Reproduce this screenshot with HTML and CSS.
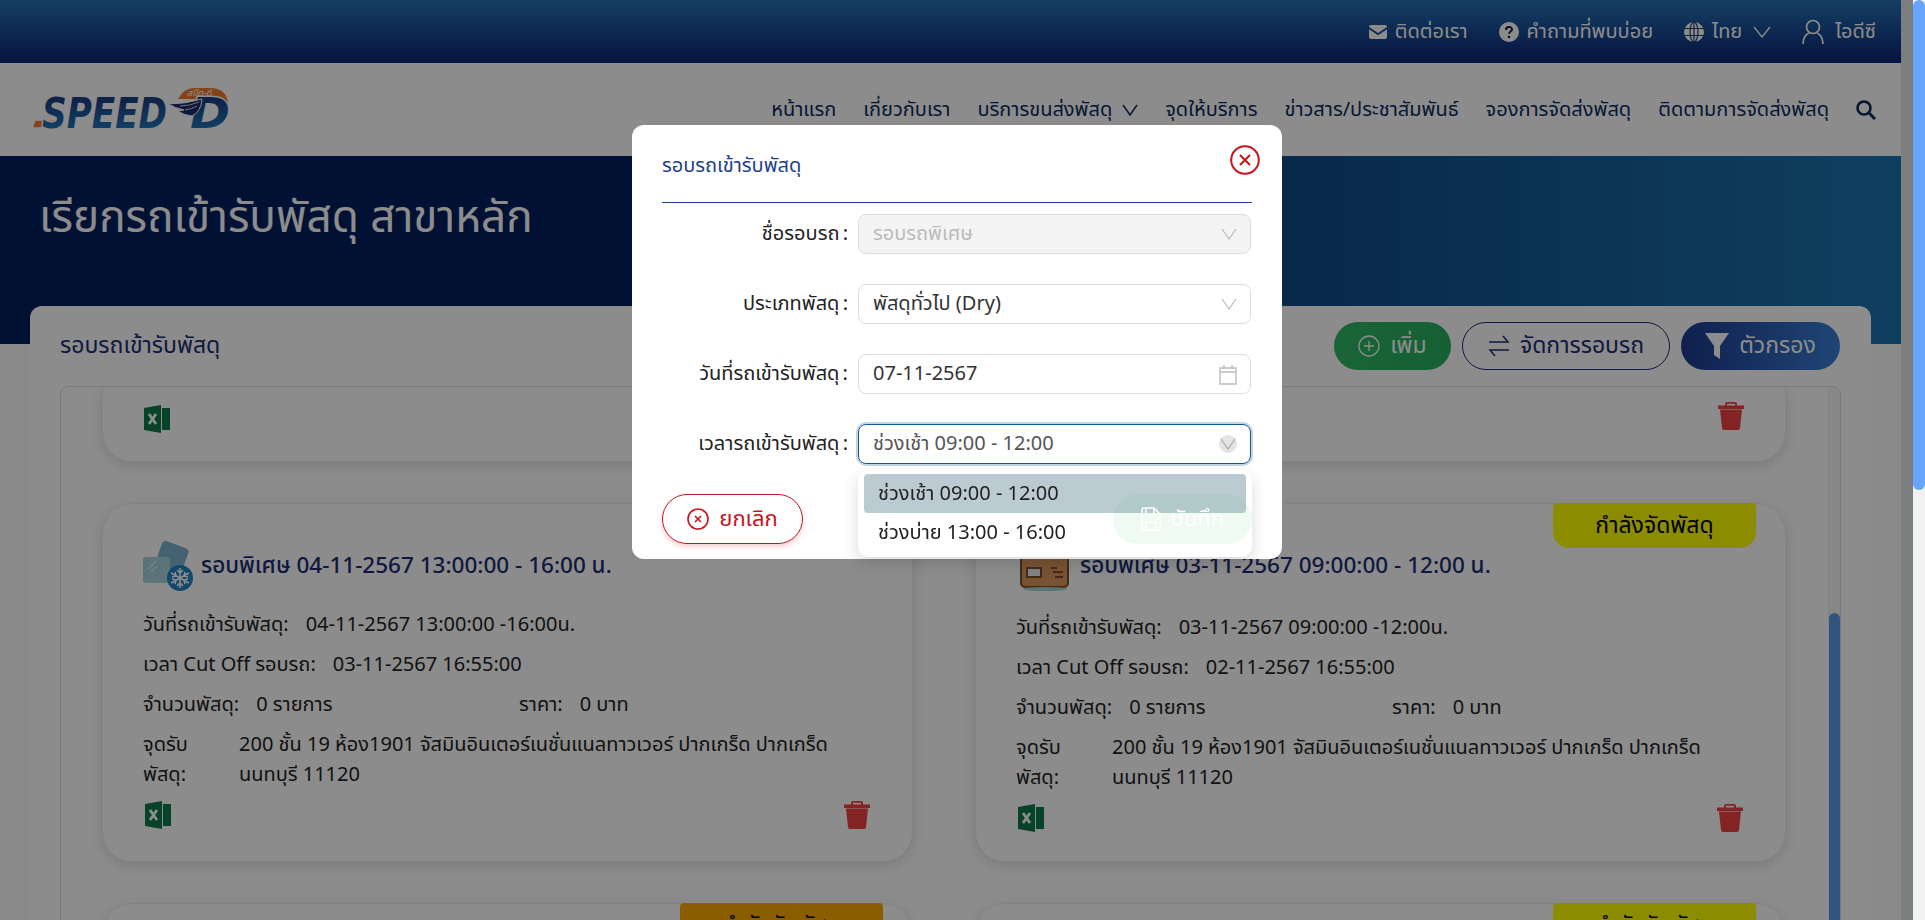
FILE: index.html
```html
<!DOCTYPE html>
<html lang="th">
<head>
  <meta charset="UTF-8">
  <title>Speed-D</title>
  <link rel="stylesheet" href="styles.css">
</head>
<body>

<div class="page">
  <div class="topbar">
    <a class="top-link">
      <svg width="18" height="14" viewBox="0 0 18 14"><path fill="#fff" d="M2 0h14a2 2 0 0 1 2 2L9 8 0 2a2 2 0 0 1 2-2zM0 4.2l9 6 9-6V12a2 2 0 0 1-2 2H2a2 2 0 0 1-2-2z"/></svg>
      ติดต่อเรา
    </a>
    <a class="top-link">
      <svg width="20" height="20" viewBox="0 0 20 20"><circle cx="10" cy="10" r="10" fill="#fff"/><path d="M7 8c0-4 6-4 6-.6 0 2.200-3 2-3 4.300" fill="none" stroke="#123" stroke-width="2"/><circle cx="10" cy="15" r="1.300" fill="#123"/></svg>
      คำถามที่พบบ่อย
    </a>
    <a class="top-link">
      <svg width="20" height="24" viewBox="0 0 20 24"><circle cx="10" cy="12" r="10" fill="#fff"/><g fill="none" stroke="#1b3f6c" stroke-width="1.200"><ellipse cx="10" cy="12" rx="4" ry="10"/><path d="M10 2v20M0 8.500h20M0 15.500h20"/></g></svg>
      ไทย
      <svg class="chev-top" width="18" height="12" viewBox="0 0 18 12"><path d="M1 1l8 10 8-10" fill="none" stroke="#fff" stroke-width="1.300"/></svg>
    </a>
    <a class="top-link top-user">
      <svg width="22" height="26" viewBox="0 0 22 26"><g fill="none" stroke="#fff" stroke-width="1.700"><circle cx="11" cy="8" r="6.500"/><path d="M1 25c0-7 4-10.500 6-11M21 25c0-7-4-10.500-6-11"/></g></svg>
      ไอดีซี
    </a>
  </div>

  <nav class="navbar">
    <svg class="logo" width="204" height="64" viewBox="0 0 204 64">
      <defs>
        <linearGradient id="logoBlue" x1="0" y1="0" x2="0" y2="1">
          <stop offset="0" stop-color="#1c2a6e"/>
          <stop offset="1" stop-color="#1f86c8"/>
        </linearGradient>
      </defs>
      <g transform="translate(0 6)">
        <path d="M5 36h30l-3 8H2z" fill="#f47a2a" stroke="#fff" stroke-width="1.500"/>
        <path d="M148 15q6-11 16-11h18q15 1 16 16l-8 3q-1-7-8-8z" fill="#f47a2a"/>
        <text class="logo-small" x="157" y="12">สปีด-ดี</text>
        <text class="logo-word" x="12" y="44" textLength="125" lengthAdjust="spacingAndGlyphs" fill="url(#logoBlue)">SPEED</text>
        <text class="logo-word" x="160" y="44" textLength="40" lengthAdjust="spacingAndGlyphs" fill="url(#logoBlue)">D</text>
        <path d="M138 20q18 0 34-5-1 13-10 17-9-1-14-5l6-1q-9-2-16-6z" fill="#1c2a6e" stroke="#fff" stroke-width="1"/>
        <path d="M150 22q10 0 19-4M155 26q7-1 12-4" fill="none" stroke="#fff" stroke-width=".8"/>
      </g>
    </svg>
    <div class="menu">
      <a>หน้าแรก</a>
      <a>เกี่ยวกับเรา</a>
      <a class="has-chev">บริการขนส่งพัสดุ
        <svg width="16" height="12" viewBox="0 0 16 12"><path d="M1 1l7 10 7-10" fill="none" stroke="#0c2a5e" stroke-width="1.500"/></svg>
      </a>
      <a>จุดให้บริการ</a>
      <a>ข่าวสาร/ประชาสัมพันธ์</a>
      <a>จองการจัดส่งพัสดุ</a>
      <a>ติดตามการจัดส่งพัสดุ</a>
      <svg width="20" height="20" viewBox="0 0 20 20"><circle cx="8" cy="8" r="6.500" fill="none" stroke="#0c2a5e" stroke-width="2.600"/><path d="M13 13l6 6" stroke="#0c2a5e" stroke-width="3"/></svg>
    </div>
  </nav>

  <div class="hero">
    <h1>เรียกรถเข้ารับพัสดุ สาขาหลัก</h1>
  </div>

  <div class="content">
    <section class="panel">
      <div class="panel-head">
        <h2>รอบรถเข้ารับพัสดุ</h2>
        <div class="panel-actions">
          <button class="btn btn-add">
            <svg width="22" height="22" viewBox="0 0 22 22"><circle cx="11" cy="11" r="10" fill="none" stroke="#fff" stroke-width="1.300"/><path d="M11 6v10M6 11h10" stroke="#fff" stroke-width="1.300"/></svg>
            เพิ่ม
          </button>
          <button class="btn btn-manage">
            <svg width="22" height="24" viewBox="0 0 22 24"><path d="M1 8h19l-5-6M21 16H2l5 6" fill="none" stroke="#1d2f74" stroke-width="1.500"/></svg>
            จัดการรอบรถ
          </button>
          <button class="btn btn-filter">
            <svg width="24" height="28" viewBox="0 0 24 28"><path fill="#fff" d="M0 1h24L15 14v13l-6-4V14z"/></svg>
            ตัวกรอง
          </button>
        </div>
      </div>

      <div class="scroll-box">
        <div class="cards">
          <article class="card-tail tail-left">
            <svg class="xl" viewBox="0 0 26 28"><use href="#excel"/></svg>
          </article>
          <article class="card-tail tail-right">
            <svg class="bin" viewBox="0 0 26 28"><use href="#trash"/></svg>
          </article>

          <article class="card">
            <div class="card-head">
              <svg class="type-icon" width="50" height="50" viewBox="0 0 50 50"><use href="#cold"/></svg>
              <span>รอบพิเศษ 04-11-2567 13:00:00 - 16:00 น.</span>
            </div>
            <div class="line"><span class="lbl">วันที่รถเข้ารับพัสดุ:</span><span>04-11-2567 13:00:00 -16:00น.</span></div>
            <div class="line"><span class="lbl">เวลา Cut Off รอบรถ:</span><span>03-11-2567 16:55:00</span></div>
            <div class="line">
              <div class="half"><span class="lbl">จำนวนพัสดุ:</span><span>0 รายการ</span></div>
              <div><span class="lbl">ราคา:</span><span>0 บาท</span></div>
            </div>
            <div class="address"><span>จุดรับ<br>พัสดุ:</span><span>200 ชั้น 19 ห้อง1901 จัสมินอินเตอร์เนชั่นแนลทาวเวอร์ ปากเกร็ด ปากเกร็ด<br>นนทบุรี 11120</span></div>
            <div class="card-foot">
              <svg class="xl" viewBox="0 0 26 28"><use href="#excel"/></svg>
              <svg class="bin" viewBox="0 0 26 28"><use href="#trash"/></svg>
            </div>
          </article>

          <article class="card card-low">
            <span class="badge badge-yellow">กำลังจัดพัสดุ</span>
            <div class="card-head">
              <svg class="type-icon" width="50" height="50" viewBox="0 0 50 50"><use href="#box"/></svg>
              <span>รอบพิเศษ 03-11-2567 09:00:00 - 12:00 น.</span>
            </div>
            <div class="line"><span class="lbl">วันที่รถเข้ารับพัสดุ:</span><span>03-11-2567 09:00:00 -12:00น.</span></div>
            <div class="line"><span class="lbl">เวลา Cut Off รอบรถ:</span><span>02-11-2567 16:55:00</span></div>
            <div class="line">
              <div class="half"><span class="lbl">จำนวนพัสดุ:</span><span>0 รายการ</span></div>
              <div><span class="lbl">ราคา:</span><span>0 บาท</span></div>
            </div>
            <div class="address"><span>จุดรับ<br>พัสดุ:</span><span>200 ชั้น 19 ห้อง1901 จัสมินอินเตอร์เนชั่นแนลทาวเวอร์ ปากเกร็ด ปากเกร็ด<br>นนทบุรี 11120</span></div>
            <div class="card-foot">
              <svg class="xl" viewBox="0 0 26 28"><use href="#excel"/></svg>
              <svg class="bin" viewBox="0 0 26 28"><use href="#trash"/></svg>
            </div>
          </article>

          <article class="card"><span class="badge badge-orange">กำลังจัดพัสดุ</span></article>
          <article class="card"><span class="badge badge-yellow">กำลังจัดพัสดุ</span></article>
        </div>
        <div class="scroll-track"><div class="scroll-thumb"></div></div>
      </div>
    </section>
  </div>
</div>
<div class="side-track"></div>
<div class="page-scroll"><div class="page-thumb"></div></div>

<svg class="defs" width="0" height="0">
  <symbol id="excel" viewBox="0 0 26 28">
    <path fill="#0b7a4b" d="M0 3l17-3v28L0 25z"/>
    <path fill="#0b7a4b" d="M18 3h8v22h-8z"/>
    <path d="M5 9l7 10M12 9l-7 10" stroke="#fff" stroke-width="2.800"/>
  </symbol>
  <symbol id="trash" viewBox="0 0 26 28">
    <path fill="#f04040" d="M2 7.500h22l-2 18.500a2 2 0 0 1-2 2H6a2 2 0 0 1-2-2z"/>
    <path fill="#f04040" d="M0 3.500h7V2a2 2 0 0 1 2-2h8a2 2 0 0 1 2 2v1.500h7V7H0zM9 1.800v1.700h8V1.800z"/>
  </symbol>
  <symbol id="cold" viewBox="0 0 50 50">
    <rect x="15" y="3" width="28" height="26" rx="4" transform="rotate(20 29 16)" fill="#7fb2cc"/>
    <rect x="0" y="16" width="27" height="26" rx="3" fill="#a5d3dd"/>
    <path d="M5 28l8-8M8 31l6-6" stroke="#d8eef2" stroke-width="1.500"/>
    <circle cx="37" cy="37" r="13" fill="#1f83c4"/>
    <path d="M37 27v20M28 32l18 10M46 32l-18 10M34 29l3 3 3-3M34 45l3-3 3 3M29 36l4-1-1-4M45 36l-4-1 1-4M29 38l4 1-1 4M45 38l-4 1 1 4" fill="none" stroke="#fff" stroke-width="1.600"/>
  </symbol>
  <symbol id="box" viewBox="0 0 50 50">
    <rect x="1" y="0" width="47" height="46" rx="4" fill="#d9975e" stroke="#7d4f2b" stroke-width="2"/>
    <rect x="7" y="27" width="14" height="9" fill="#f1f1f1" stroke="#7d4f2b" stroke-width="2"/>
    <path d="M31 27h6M33 31h10M35 36h8" stroke="#7d4f2b" stroke-width="2"/>
    <rect x="20" y="2" width="8" height="12" rx="3" fill="#eee"/>
    <ellipse cx="25" cy="48" rx="22" ry="2" fill="#a6d5cf"/>
  </symbol>
</svg>

<div class="backdrop">
  <div class="modal">
    <div class="modal-head">
      <h3>รอบรถเข้ารับพัสดุ</h3>
      <svg class="modal-close" width="30" height="30" viewBox="0 0 30 30"><circle cx="15" cy="15" r="13.800" fill="none" stroke="#c4161c" stroke-width="2"/><path d="M10 10l10 10M20 10L10 20" stroke="#c4161c" stroke-width="2"/></svg>
    </div>
    <div class="form-row">
      <label>ชื่อรอบรถ :</label>
      <div class="field field-disabled">รอบรถพิเศษ
        <svg width="16" height="12" viewBox="0 0 16 12"><path d="M1 1l7 10 7-10" fill="none" stroke="#bbb" stroke-width="1.200"/></svg>
      </div>
    </div>
    <div class="form-row">
      <label>ประเภทพัสดุ :</label>
      <div class="field">พัสดุทั่วไป (Dry)
        <svg width="16" height="12" viewBox="0 0 16 12"><path d="M1 1l7 10 7-10" fill="none" stroke="#bbb" stroke-width="1.200"/></svg>
      </div>
    </div>
    <div class="form-row">
      <label>วันที่รถเข้ารับพัสดุ :</label>
      <div class="field">07-11-2567
        <svg width="18" height="22" viewBox="0 0 18 22"><path d="M1 5h16v16H1zM1 9h16M5 2v4M13 2v4" fill="none" stroke="#bbb" stroke-width="1.400"/></svg>
      </div>
    </div>
    <div class="form-row">
      <label>เวลารถเข้ารับพัสดุ :</label>
      <div class="field field-focus">ช่วงเช้า 09:00 - 12:00
        <span class="chev-wrap"><svg width="16" height="12" viewBox="0 0 16 12"><path d="M1 1l7 10 7-10" fill="none" stroke="#aaa" stroke-width="1.200"/></svg></span>
      </div>
      <div class="dropdown">
        <div class="option option-active">ช่วงเช้า 09:00 - 12:00</div>
        <div class="option">ช่วงบ่าย 13:00 - 16:00</div>
      </div>
    </div>
    <div class="modal-foot">
      <button class="btn-cancel">
        <svg width="22" height="22" viewBox="0 0 22 22"><circle cx="11" cy="11" r="10" fill="none" stroke="#c4161c" stroke-width="1.600"/><path d="M8 8l6 6M14 8l-6 6" stroke="#c4161c" stroke-width="1.600"/></svg>
        ยกเลิก
      </button>
      <button class="btn-save">
        <svg width="20" height="24" viewBox="0 0 20 24"><path d="M1 3a2 2 0 0 1 2-2h10l6 6v14a2 2 0 0 1-2 2H3a2 2 0 0 1-2-2zM5 1v7h8V1M5 23v-8h10v8" fill="none" stroke="#fff" stroke-width="1.500"/></svg>
        บันทึก
      </button>
    </div>
  </div>
</div>

</body>
</html>
```
FILE: styles.css
```css
* { box-sizing: border-box; }
html, body { margin: 0; height: 100%; overflow: hidden; }
body { display: flex; font-family: "Noto Sans Thai", "Noto Sans", sans-serif; color: #222; background: #f5f5f5; font-size: 20px; }
button { font: inherit; cursor: pointer; }
h1, h2, h3 { margin: 0; font-weight: 400; }

.page { width: 1901px; height: 920px; flex: none; overflow: hidden; background: #fbfbfb; }
.side-track { width: 12px; flex: none; background: #e0e7e9; }
.page-scroll { width: 12px; flex: none; background: #f1f1f1; }
.page-thumb { height: 490px; background: #66a6ff; border-radius: 6px; }

.topbar { height: 63px; display: flex; justify-content: flex-end; align-items: center; gap: 31px; padding-right: 25px; color: #fff; background: linear-gradient(#2673b4, #0b2474); }
.top-link { display: flex; align-items: center; gap: 8px; }
.top-user { gap: 11px; }
.chev-top { margin-left: 3px; }

.navbar { height: 93px; display: flex; justify-content: space-between; align-items: center; padding: 0 25px 0 30px; background: #fff; }
.menu { display: flex; align-items: center; gap: 27px; color: #0c2a5e; }
.has-chev { display: flex; align-items: center; gap: 10px; }
.logo-word { font: italic 700 43px "DejaVu Sans", sans-serif; stroke: #fff; stroke-width: 3px; paint-order: stroke; }
.logo-small { font: italic 9px "Noto Sans Thai", "Noto Sans", sans-serif; fill: #fff; }

.hero { height: 188px; padding: 18px 39px; background: linear-gradient(90deg, #03205f 35%, #1d74ad); }
.hero h1 { color: #fff; font-size: 44px; line-height: 90px; }

.content { padding: 0 30px; }
.panel { margin-top: -38px; height: 700px; background: #fff; border-radius: 12px; padding: 16px 30px 0; }
.panel-head { height: 48px; margin-bottom: 16px; display: flex; justify-content: space-between; align-items: center; }
.panel-head h2 { font-size: 23px; color: #1d2f74; }
.panel-actions { display: flex; gap: 11px; margin-right: 1px; }
.btn { height: 48px; border-radius: 24px; border: 0; display: flex; align-items: center; justify-content: center; gap: 10px; font-size: 23px; color: #fff; }
.btn-add { width: 117px; background: linear-gradient(90deg, #2fb964, #27ae60); }
.btn-manage { width: 208px; background: #fff; color: #1d2f74; border: 1px solid #1d2f74; }
.btn-filter { width: 159px; background: linear-gradient(90deg, #1d3a8f, #3a7fd5); }

.scroll-box { position: relative; height: 560px; border: 1px solid #ddd; border-radius: 8px 8px 0 0; overflow: hidden; }
.cards { display: grid; grid-template-columns: 811px 811px; column-gap: 62px; row-gap: 41px; padding: 0 41px; }
.scroll-track { position: absolute; top: 0; bottom: 0; right: 0; width: 12px; background: #f6f6f6; border-left: 1px solid #eee; }
.scroll-thumb { position: absolute; top: 226px; bottom: 0; left: 0; right: 0; background: #5b9ce8; border-radius: 6px 6px 0 0; }

.card-tail { height: 75px; display: flex; background: #fff; border: 1px solid #eee; border-top: 0; border-radius: 0 0 30px 30px; box-shadow: 0 4px 14px rgba(0, 0, 0, .12); }
.tail-left { padding: 18px 0 0 41px; }
.tail-right { padding: 15px 41px 0 0; justify-content: flex-end; }

.card { position: relative; height: 359px; padding: 37px 40px 0; background: #fff; border: 1px solid #eee; border-radius: 30px; box-shadow: 0 4px 14px rgba(0, 0, 0, .12); }
.card-head { display: flex; align-items: center; gap: 8px; height: 50px; font-size: 22.5px; font-weight: 500; color: #1d2f74; }
.line { height: 40px; display: flex; align-items: center; }
.lbl { margin-right: 17px; }
.card-head + .line { margin-top: 14px; }
.half { width: 376px; }
.address { display: grid; grid-template-columns: 96px 620px; line-height: 30px; margin-top: 5px; }
.card-foot { display: flex; justify-content: space-between; padding: 0 2px; margin-top: 11px; }
.xl, .bin { width: 26px; height: 28px; }
.card-low .card-head { gap: 10px; }
.card-low .card-head + .line { margin-top: 17px; }
.card-low .type-icon { margin-left: 4px; }
.badge { position: absolute; top: -1px; right: 29px; width: 203px; height: 45px; display: flex; align-items: center; justify-content: center; color: #000; font-size: 23px; border-radius: 4px 4px 16px 16px; }
.badge-yellow { background: #ffff00; }
.badge-orange { background: #fbaa00; }

.defs { position: absolute; }

.backdrop { position: fixed; top: 0; left: 0; bottom: 0; width: 1913px; background: rgba(0, 0, 0, .45); }
.modal { position: absolute; top: 125px; left: 632px; width: 650px; height: 434px; background: #fff; border-radius: 12px; padding: 0 30px; }
.modal-head { height: 78px; display: flex; justify-content: space-between; align-items: flex-start; padding-top: 21px; border-bottom: 1px solid #1d3f8f; }
.modal-head h3 { font-size: 20px; color: #1d3f8f; margin-top: 5px; }
.modal-close { margin-right: -8px; margin-top: -1px; }
.form-row { position: relative; display: flex; align-items: center; height: 40px; margin-top: 30px; }
.modal-head + .form-row { margin-top: 11px; }
.form-row label { width: 186px; text-align: right; margin-right: 10px; word-spacing: -2px; white-space: nowrap; }
.field { width: 393px; height: 40px; display: flex; align-items: center; justify-content: space-between; padding: 0 13px 0 14px; border: 1px solid #ddd; border-radius: 8px; color: #333; }
.field-disabled { background: #f4f4f4; color: #bbb; }
.field-focus { border: 1px solid #0f5a9c; box-shadow: 0 0 0 2px rgba(15, 90, 156, .25); color: #555; }
.chev-wrap { width: 18px; height: 18px; border-radius: 50%; background: #e4e4e4; display: flex; align-items: center; justify-content: center; }
.dropdown { position: absolute; top: 46px; left: 196px; width: 394px; height: 87px; padding: 4px 6px; background: #fff; border-radius: 10px; box-shadow: 0 6px 16px rgba(0, 0, 0, .15); z-index: 2; }
.option { height: 39px; display: flex; align-items: center; padding-left: 14px; border-radius: 4px; }
.option-active { background: #bccbd2; }
.modal-foot { position: absolute; left: 30px; right: 30px; top: 369px; display: flex; justify-content: space-between; }
.btn-cancel { width: 141px; height: 50px; border-radius: 25px; border: 1px solid #c4161c; background: #fff; color: #c4161c; font-size: 22px; display: flex; align-items: center; justify-content: center; gap: 10px; box-shadow: 0 3px 5px rgba(196, 22, 28, .2); }
.btn-save { position: relative; z-index: 3; width: 139px; height: 50px; border-radius: 25px; border: 0; background: rgba(47, 185, 100, .08); color: #fff; font-size: 22px; display: flex; align-items: center; justify-content: center; gap: 10px; }
```
